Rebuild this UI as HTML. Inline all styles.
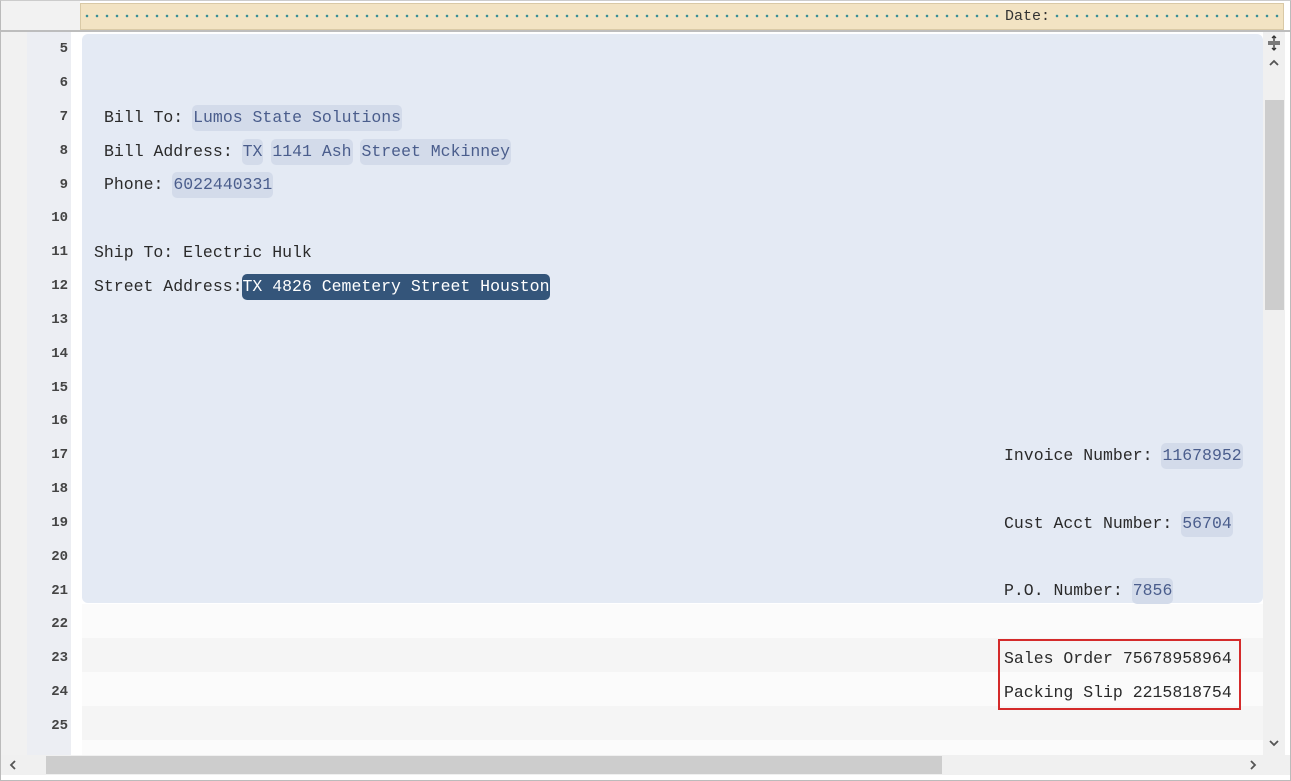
<!DOCTYPE html>
<html><head><style>
*{margin:0;padding:0;box-sizing:border-box}
body{width:1291px;height:781px;background:#fff;position:relative;overflow:hidden;font-family:"Liberation Mono",monospace}
.abs{position:absolute}
.ln{position:absolute;left:0;width:68px;text-align:right;font:bold 14px "Liberation Mono",monospace;color:#444;height:34px;line-height:34px}
.tx{position:absolute;font-size:16.5px;color:#2a2a2a;height:34px;line-height:34px;white-space:pre}
.c{display:inline-block;background:#d3dbea;color:#4a5d8c;border-radius:5px;line-height:26px;padding:0 1px;margin:0 -1px}
.d{display:inline-block;background:#34557a;color:#fff;border-radius:5px;line-height:26px;padding:0 1px;margin:0 -1px}
</style></head><body>
<div class="abs" style="left:0;top:0;width:1291px;height:781px;border:1px solid #bbb;border-top-color:#ccc"></div>
<div class="abs" style="left:1px;top:1px;width:79px;height:30px;background:#f2f2f2"></div>
<div class="abs" style="left:80px;top:3px;width:1204px;height:27px;background:#f2e3c3;border:1px solid #d9c9a6;"></div>
<div class="abs" style="left:82px;top:14px;width:1200px;height:4px;background-image:radial-gradient(circle,#3a8f96 1.1px,transparent 1.5px);background-size:10px 4px"></div>
<div class="abs" style="left:1003px;top:6px;height:22px;padding:0 2px;background:#f2e3c3;font-size:15px;line-height:22px;color:#333">Date:</div>
<div class="abs" style="left:1px;top:30px;width:1289px;height:2px;background:#bdbdbd"></div>
<div class="abs" style="left:1px;top:32px;width:26px;height:723px;background:#f1f1f1"></div>
<div class="abs" style="left:27px;top:32px;width:44px;height:723px;background:#eceef3"></div>
<div class="abs" style="left:82px;top:604px;width:1181px;height:34px;background:#fbfbfb"></div>
<div class="abs" style="left:82px;top:638px;width:1181px;height:34px;background:#f5f5f5"></div>
<div class="abs" style="left:82px;top:672px;width:1181px;height:34px;background:#fbfbfb"></div>
<div class="abs" style="left:82px;top:706px;width:1181px;height:34px;background:#f5f5f5"></div>
<div class="abs" style="left:82px;top:740px;width:1181px;height:15px;background:#fbfbfb"></div>
<div class="abs" style="left:82px;top:34px;width:1181px;height:569px;background:#e4eaf4;border-radius:6px"></div>

<div class="ln" style="top:32px">5</div>
<div class="ln" style="top:66px">6</div>
<div class="ln" style="top:100px">7</div>
<div class="ln" style="top:134px">8</div>
<div class="ln" style="top:168px">9</div>
<div class="ln" style="top:201px">10</div>
<div class="ln" style="top:235px">11</div>
<div class="ln" style="top:269px">12</div>
<div class="ln" style="top:303px">13</div>
<div class="ln" style="top:337px">14</div>
<div class="ln" style="top:371px">15</div>
<div class="ln" style="top:404px">16</div>
<div class="ln" style="top:438px">17</div>
<div class="ln" style="top:472px">18</div>
<div class="ln" style="top:506px">19</div>
<div class="ln" style="top:540px">20</div>
<div class="ln" style="top:574px">21</div>
<div class="ln" style="top:607px">22</div>
<div class="ln" style="top:641px">23</div>
<div class="ln" style="top:675px">24</div>
<div class="ln" style="top:709px">25</div>

<div class="tx" style="left:104px;top:101px">Bill To: <span class="c">Lumos State Solutions</span></div>
<div class="tx" style="left:104px;top:135px">Bill Address: <span class="c">TX</span> <span class="c">1141 Ash</span> <span class="c">Street Mckinney</span></div>
<div class="tx" style="left:104px;top:168px">Phone: <span class="c">6022440331</span></div>
<div class="tx" style="left:94px;top:236px">Ship To: Electric Hulk</div>
<div class="tx" style="left:94px;top:270px">Street Address:<span class="d">TX 4826 Cemetery Street Houston</span></div>
<div class="tx" style="left:1004px;top:439px">Invoice Number: <span class="c">11678952</span></div>
<div class="tx" style="left:1004px;top:507px">Cust Acct Number: <span class="c">56704</span></div>
<div class="tx" style="left:1004px;top:574px">P.O. Number: <span class="c">7856</span></div>
<div class="tx" style="left:1004px;top:642px">Sales Order 75678958964</div>
<div class="tx" style="left:1004px;top:676px">Packing Slip 2215818754</div>
<div class="abs" style="left:998px;top:639px;width:243px;height:71px;border:2px solid #d42a2a"></div>

<div class="abs" style="left:1263px;top:32px;width:22px;height:723px;background:#f0f0f0"></div>
<div class="abs" style="left:1265px;top:100px;width:19px;height:210px;background:#cdcdcd"></div>
<svg class="abs" style="left:1266px;top:35px" width="16" height="16" viewBox="0 0 16 16"><path d="M2 7h12M2 9h12M8 1v5M8 10v5M6 3l2-2 2 2M6 13l2 2 2-2" stroke="#333" stroke-width="1.3" fill="none"/></svg>
<svg class="abs" style="left:1268px;top:58px" width="12" height="10" viewBox="0 0 12 10"><path d="M2 7l4-4 4 4" stroke="#555" stroke-width="1.8" fill="none"/></svg>
<svg class="abs" style="left:1268px;top:738px" width="12" height="10" viewBox="0 0 12 10"><path d="M2 3l4 4 4-4" stroke="#555" stroke-width="1.8" fill="none"/></svg>
<div class="abs" style="left:1px;top:755px;width:1289px;height:20px;background:#f0f0f0"></div>
<div class="abs" style="left:46px;top:756px;width:896px;height:18px;background:#cdcdcd"></div>
<svg class="abs" style="left:8px;top:759px" width="10" height="12" viewBox="0 0 10 12"><path d="M7 2L3 6l4 4" stroke="#555" stroke-width="1.8" fill="none"/></svg>
<svg class="abs" style="left:1248px;top:759px" width="10" height="12" viewBox="0 0 10 12"><path d="M3 2l4 4-4 4" stroke="#555" stroke-width="1.8" fill="none"/></svg>
</body></html>
